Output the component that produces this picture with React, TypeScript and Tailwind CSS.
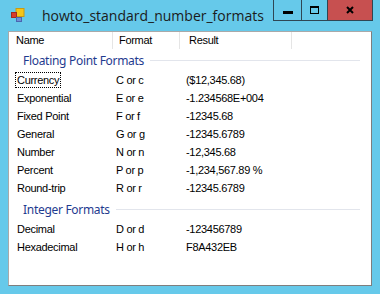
import React from "react";

const rows1 = [
  ["Currency", "C or c", "($12,345.68)"],
  ["Exponential", "E or e", "-1.234568E+004"],
  ["Fixed Point", "F or f", "-12345.68"],
  ["General", "G or g", "-12345.6789"],
  ["Number", "N or n", "-12,345.68"],
  ["Percent", "P or p", "-1,234,567.89 %"],
  ["Round-trip", "R or r", "-12345.6789"],
];

const rows2 = [
  ["Decimal", "D or d", "-123456789"],
  ["Hexadecimal", "H or h", "F8A432EB"],
];

const FormIcon = () => (
  <svg width="16" height="16" viewBox="0 0 16 16" className="shrink-0">
    <rect x="6" y="0.5" width="8" height="8" fill="#f5c518" stroke="#c99a10" />
    <rect x="1.5" y="4.5" width="5" height="5" fill="#d93b2b" stroke="#a02a1f" />
    <rect x="6.5" y="9.5" width="5" height="4" fill="#6f8fd6" stroke="#4a66b0" />
  </svg>
);

const Row = ({ cells, focused }: { cells: string[]; focused?: boolean }) => (
  <div className="flex h-[18px] items-center">
    <div className="w-[105px] pl-[6px]">
      <span
        className={
          focused
            ? "border border-dotted border-black px-[1px] py-[1px]"
            : "px-[2px]"
        }
      >
        {cells[0]}
      </span>
    </div>
    <div className="w-[71px] pl-[2px]">{cells[1]}</div>
    <div className="pl-[1px]">{cells[2]}</div>
  </div>
);

const Group = ({ title, first }: { title: string; first?: boolean }) => (
  <div
    className={`flex items-center gap-[6px] pl-[14px] pr-[11px] ${first ? "h-[22px]" : "mt-[1px] h-[22px]"}`}
  >
    <span
      className="text-[12px] text-[#1f3b8f] whitespace-nowrap"
      style={{ fontFamily: '"Noto Sans", sans-serif' }}
    >
      {title}
    </span>
    <div className="h-px flex-1 bg-[#e2e5ec]" />
  </div>
);

export default function App() {
  return (
    <div className="flex h-[294px] w-[380px] flex-col bg-[#66c9ea]">
      {/* title bar */}
      <div className="flex h-[31px] shrink-0 items-start">
        <div className="mt-[8px] ml-[10px]">
          <FormIcon />
        </div>
        <div
          className="mt-[6px] ml-[16px] text-[14px] text-[#1b1b1b] leading-[20px]"
          style={{ fontFamily: '"Open Sans", sans-serif' }}
        >
          howto_standard_number_formats
        </div>
        <div className="ml-auto mr-[7px] flex h-[21px] border border-t-0 border-[#2f4654]">
          <div className="flex w-[28px] items-center justify-center border-r border-[#2f4654]">
            <div className="mt-[4px] h-[3px] w-[10px] bg-black" />
          </div>
          <div className="flex w-[26px] items-center justify-center border-r border-[#2f4654]">
            <div className="h-[8px] w-[9px] border border-t-[2px] border-black" />
          </div>
          <div className="flex w-[44px] items-center justify-center bg-[#c75050]">
            <svg width="8" height="8" viewBox="0 0 8 8">
              <path d="M1 1 L7 7 M7 1 L1 7" stroke="#000" strokeWidth="2" />
            </svg>
          </div>
        </div>
      </div>

      {/* client area */}
      <div
        className="mx-[8px] mb-[8px] flex-1 border border-[#a9a9a9] border-r-[#7e7e7e] border-b-[#7e7e7e] bg-white text-[11px] text-black leading-[13px] tracking-[-0.3px]"
        style={{ fontFamily: '"Liberation Sans", Arial, sans-serif' }}
      >
        <div className="flex h-[17px] items-center">
          <div className="flex h-full w-[104px] items-center border-r border-[#e5e5e5] pl-[7px]">
            Name
          </div>
          <div className="flex h-full w-[67px] items-center border-r border-[#e5e5e5] pl-[6px]">
            Format
          </div>
          <div className="flex h-full w-[112px] items-center border-r border-[#e5e5e5] pl-[9px]">
            Result
          </div>
        </div>
        <Group title="Floating Point Formats" first />
        {rows1.map((r, i) => (
          <Row key={r[0]} cells={r} focused={i === 0} />
        ))}
        <Group title="Integer Formats" />
        {rows2.map((r) => (
          <Row key={r[0]} cells={r} />
        ))}
      </div>
    </div>
  );
}
